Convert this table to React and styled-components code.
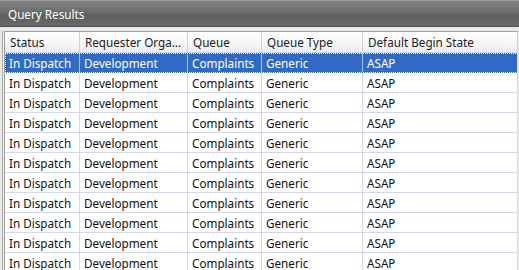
import React from "react";
import styled, { createGlobalStyle } from "styled-components";

const Global = createGlobalStyle`
  html, body { margin: 0; padding: 0; background: #f0f0f0; }
  body { font-family: "Noto Sans", "Open Sans", sans-serif; }
`;

const Panel = styled.div`
  width: 519px;
  height: 270px;
  display: flex;
  flex-direction: column;
  background: #ececec;
  overflow: hidden;
`;

const TitleBar = styled.div`
  height: 27px;
  flex: none;
  box-sizing: border-box;
  display: flex;
  align-items: center;
  padding-left: 8px;
  color: #ffffff;
  font-size: 11.7px;
  border-top: 1px solid #9a9a9a;
  border-bottom: 1px solid #4e4e4e;
  background: linear-gradient(#838383 0%, #6c6c6c 45%, #5e5e5e 55%, #686868 100%);
`;

const Body = styled.div`
  flex: 1;
  display: flex;
  padding: 4px 1px 0 2px;
  background: #e9e9e9;
`;

const Frame = styled.div`
  flex: 1;
  display: flex;
  border-left: 1px solid #a8a8a8;
  padding-left: 1px;
  background: #f4f4f4;
`;

const Grid = styled.div`
  flex: 1;
  border-left: 1px solid #9c9c9c;
  border-top: 1px solid #a0a0a0;
  background: #ffffff;
  display: flex;
  flex-direction: column;
`;

const COLS = "75px 108px 74px 101px 1fr";

const HeaderRow = styled.div`
  display: grid;
  grid-template-columns: ${COLS};
  height: 20px;
  border-bottom: 1px solid #d0d0d8;
  background: linear-gradient(#ffffff 0%, #f7f7f9 55%, #ebebef 100%);
`;

const HeaderCell = styled.div`
  display: flex;
  align-items: center;
  padding-left: 5px;
  font-size: 11.7px;
  color: #222222;
  border-right: 1px solid #d2d2d6;
  white-space: nowrap;
  overflow: hidden;
`;

const Row = styled.div`
  display: grid;
  grid-template-columns: ${COLS};
  height: 19px;
  border-bottom: 1px solid ${(p) => (p.$selected ? "#316ac5" : "#d4d8ee")};
  background: ${(p) => (p.$selected ? "#316ac5" : "#ffffff")};
  color: ${(p) => (p.$selected ? "#ffffff" : "#111111")};
  outline: ${(p) => (p.$selected ? "1px dotted #ffffff" : "none")};
  outline-offset: -1px;
`;

const Cell = styled.div`
  display: flex;
  align-items: center;
  padding-left: 4px;
  font-size: 11.7px;
  border-right: 1px solid ${(p) => (p.$selected ? "#a9c0e8" : "#d4d8ee")};
  white-space: nowrap;
  overflow: hidden;
`;

const headers = ["Status", "Requester Orga...", "Queue", "Queue Type", "Default Begin State"];
const rowData = ["In Dispatch", "Development", "Complaints", "Generic", "ASAP"];

export default function App() {
  return (
    <>
      <Global />
      <Panel>
        <TitleBar>Query Results</TitleBar>
        <Body>
          <Frame>
            <Grid>
              <HeaderRow>
                {headers.map((h) => (
                  <HeaderCell key={h}>{h}</HeaderCell>
                ))}
              </HeaderRow>
              {Array.from({ length: 11 }).map((_, i) => (
                <Row key={i} $selected={i === 0}>
                  {rowData.map((c) => (
                    <Cell key={c} $selected={i === 0}>{c}</Cell>
                  ))}
                </Row>
              ))}
            </Grid>
          </Frame>
        </Body>
      </Panel>
    </>
  );
}
